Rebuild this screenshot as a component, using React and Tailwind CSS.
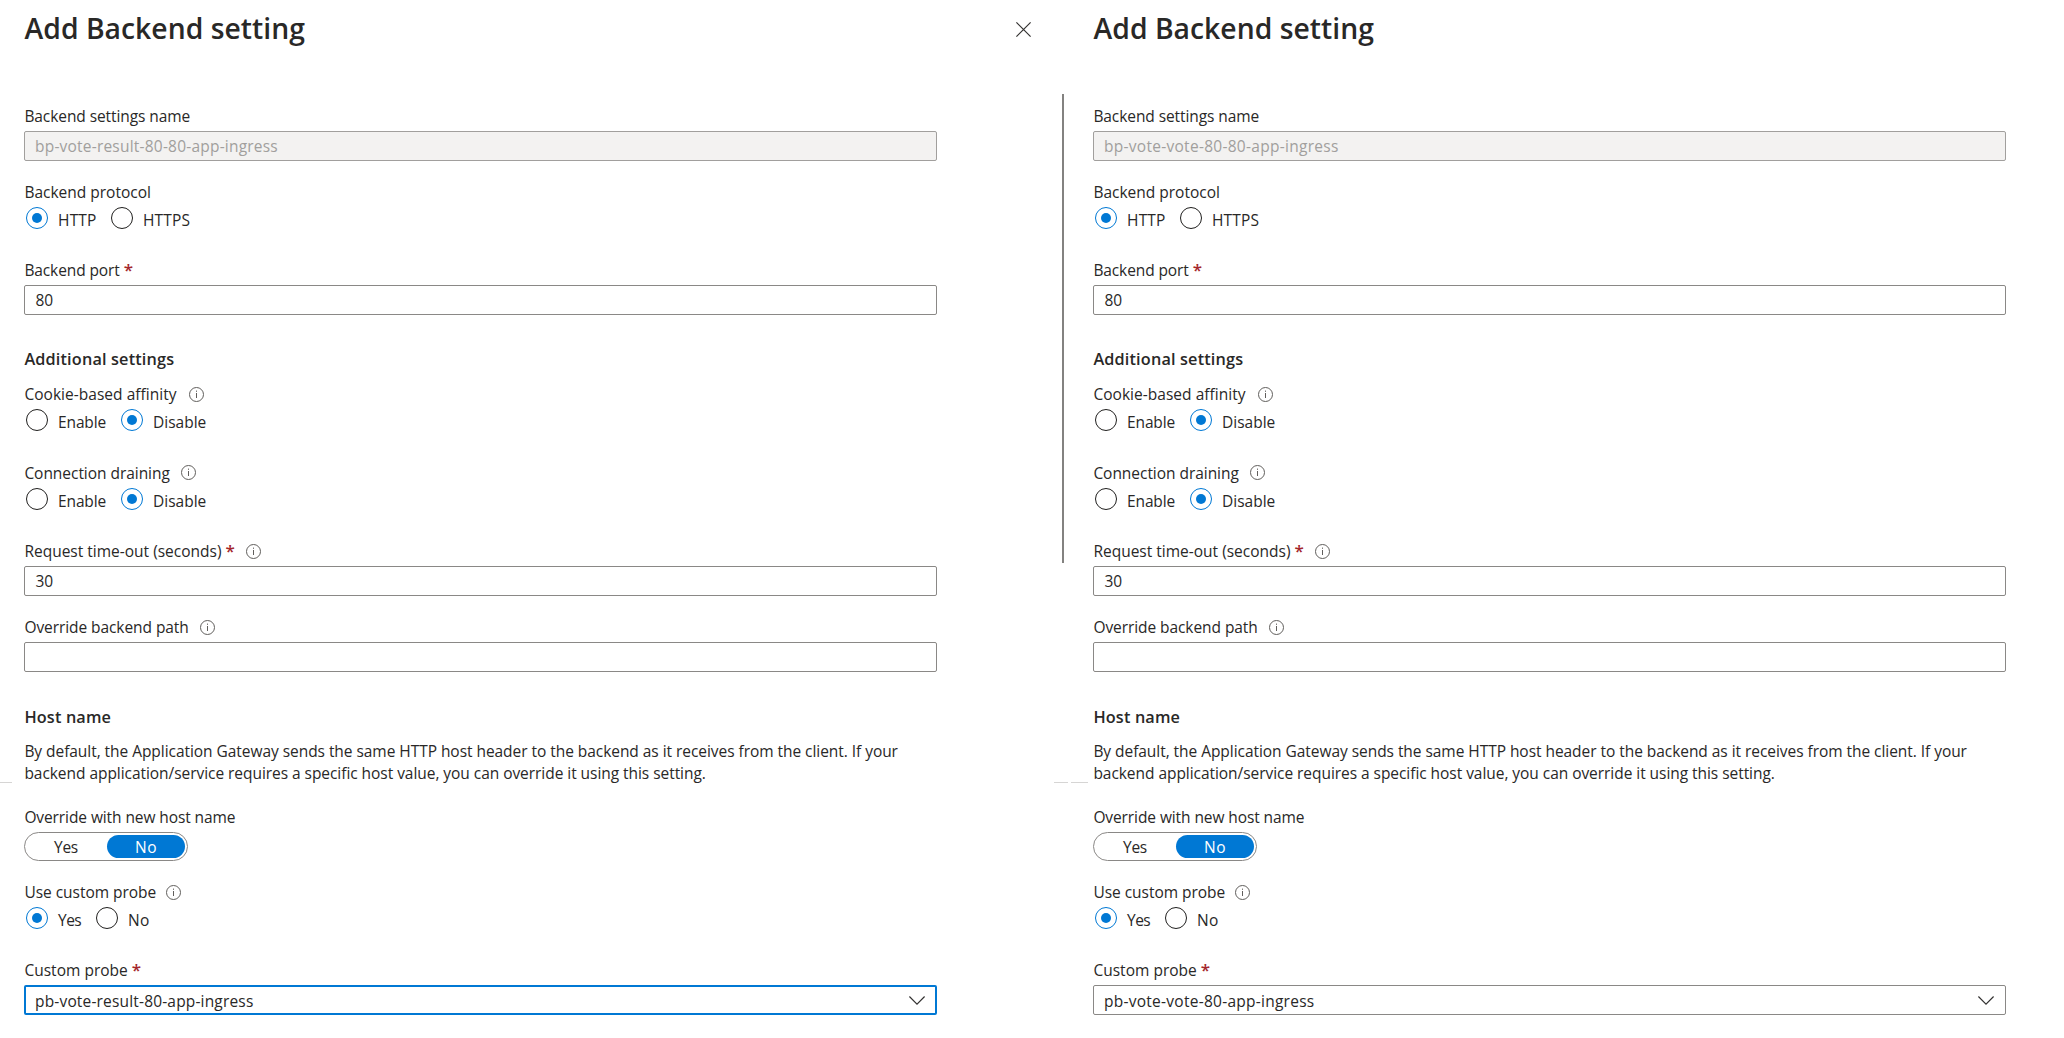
const InfoIcon = () => (
  <svg className="size-[15px] shrink-0" viewBox="0 0 15 15" fill="none" stroke="#605e5c">
    <circle cx="7.5" cy="7.5" r="7" />
    <path d="M7.5 6v5M7.5 3.6v1.2" />
  </svg>
);

const CloseIcon = () => (
  <svg className="size-[15px]" viewBox="0 0 15 15" fill="none" stroke="#323130" strokeWidth="1.15">
    <path d="M.4.4l14.2 14.2M14.6.4L.4 14.6" />
  </svg>
);

const ChevronIcon = () => (
  <svg className="mr-[11px] h-[9px] w-4 shrink-0" viewBox="0 0 16 9" fill="none" stroke="#323130" strokeWidth="1.15">
    <path d="M.4.5L8 8.1 15.6.5" />
  </svg>
);

function Label({ children, className = "", required, info }) {
  return (
    <div className="flex h-[26px] items-start whitespace-nowrap pl-[0.4px]">
      <span className={className}>{children}</span>
      {required && (
        <span className="ml-1 h-[22px] w-2 text-[17px] font-semibold leading-[22px] text-[#a4262c]">*</span>
      )}
      {info && <span className={info}><InfoIcon /></span>}
    </div>
  );
}

function Radio({ checked, label, className = "" }) {
  return (
    <div className="flex h-[22px]">
      <span
        className={
          checked
            ? "flex size-[22px] items-center justify-center rounded-full border border-[#0078d4]"
            : "size-[22px] rounded-full border border-[#201f1e]"
        }
      >
        {checked && <span className="size-2.5 rounded-full bg-[#0078d4]" />}
      </span>
      <span className={`ml-2.5 mt-0.5 whitespace-nowrap ${className}`}>{label}</span>
    </div>
  );
}

function Field({ value, disabled, className = "" }) {
  return (
    <div
      className={
        disabled
          ? "flex h-[30px] items-center rounded-[2px] border border-[#a19f9d] bg-[#f3f2f1] pl-2.5 text-[#a19f9d]"
          : "flex h-[30px] items-center rounded-[2px] border border-[#8a8886] bg-white pl-[10.4px]"
      }
    >
      <span className={className}>{value}</span>
    </div>
  );
}

function Select({ value, focused, className = "" }) {
  return (
    <div
      className={
        focused
          ? "flex h-[30px] items-center justify-between rounded-[2px] border-2 border-[#0078d4] pl-[9px] [&>svg]:mr-2.5"
          : "flex h-[30px] items-center justify-between rounded-[2px] border border-[#8a8886] pl-2.5"
      }
    >
      <span className={`mt-0.5 ${className}`}>{value}</span>
      <ChevronIcon />
    </div>
  );
}

function Heading({ children, className }) {
  return <h2 className={`pl-[0.4px] text-[16.25px] font-semibold leading-[22px] tracking-[0.16px] ${className}`}>{children}</h2>;
}

function Panel({ name, probe, focused, nameClass, probeClass }) {
  return (
    <section className="w-[913px] shrink-0">
      <header className="h-[105px] pl-[0.5px] pt-[9px]">
        <h1 className="text-[28.3px] font-semibold leading-[38px] tracking-[0.03px]">Add Backend setting</h1>
      </header>

      <Label className="tracking-[-0.08px]">Backend settings name</Label>
      <Field value={name} disabled className={nameClass} />

      <div className="mt-5">
        <Label>Backend protocol</Label>
        <div className="ml-0.5 flex">
          <div className="w-[85px]"><Radio checked label="HTTP" className="tracking-[0.2px]" /></div>
          <Radio label="HTTPS" className="tracking-[0.15px]" />
        </div>
      </div>

      <div className="mt-[30px]">
        <Label required className="tracking-[-0.11px]">Backend port</Label>
        <Field value="80" />
      </div>

      <Heading className="mt-[33px] h-[35px]">Additional settings</Heading>
      <Label info="ml-3 mt-1" className="tracking-[0.03px]">Cookie-based affinity</Label>
      <div className="ml-0.5 flex">
        <div className="w-[95px]"><Radio label="Enable" className="tracking-[-0.12px]" /></div>
        <Radio checked label="Disable" />
      </div>

      <div className="mt-[31px]">
        <Label info="ml-[11.5px] mt-[3px]" className="tracking-[-0.04px]">Connection draining</Label>
        <div className="ml-0.5 flex">
          <div className="w-[95px]"><Radio label="Enable" className="tracking-[-0.12px]" /></div>
          <Radio checked label="Disable" />
        </div>
      </div>

      <div className="mt-[30px]">
        <Label required info="ml-[12.6px] mt-1">Request time-out (seconds)</Label>
        <Field value="30" />
      </div>

      <div className="mt-5">
        <Label info="ml-[11px] mt-1" className="tracking-[-0.07px]">Override backend path</Label>
        <Field value="" />
      </div>

      <Heading className="mt-[34px] h-[34px]">Host name</Heading>
      <p className="h-11 pl-[0.4px] tracking-[-0.048px]">
        By default, the Application Gateway sends the same HTTP host header to the backend as it receives from the client. If your backend application/service requires a specific host value, you can override it using this setting.
      </p>

      <div className="mt-[22px]">
        <Label className="tracking-[-0.09px]">Override with new host name</Label>
        <div className="flex h-[29px] w-[164px] items-center rounded-full border border-[#8a8886] pr-0.5">
          <span className="flex-1 pt-px text-center tracking-[-0.3px]">Yes</span>
          <span className="flex h-[23px] w-[78px] items-center justify-center rounded-full bg-[#0078d4] pt-px tracking-[0.4px] text-white">
            No
          </span>
        </div>
      </div>

      <div className="mt-5">
        <Label info="ml-2.5 mt-1" className="tracking-[-0.03px]">Use custom probe</Label>
        <div className="ml-0.5 flex">
          <div className="w-[70px]"><Radio checked label="Yes" className="tracking-[-0.5px]" /></div>
          <Radio label="No" className="tracking-[0.4px]" />
        </div>
      </div>

      <div className="mt-[30px]">
        <Label required className="tracking-[0.02px]">Custom probe</Label>
        <Select value={probe} focused={focused} className={probeClass} />
      </div>
    </section>
  );
}

export default function App() {
  return (
    <main className="flex h-[1038px] w-[2064px] overflow-hidden bg-white font-['Open_Sans','Noto_Sans',sans-serif] text-[15.5px] leading-[22px] text-[#292827]">
      <div className="w-6 shrink-0 pt-[782px]">
        <div className="h-px w-3 bg-[#d6d5d4]" />
      </div>
      <Panel
        focused
        name="bp-vote-result-80-80-app-ingress"
        nameClass="tracking-[0.21px]"
        probe="pb-vote-result-80-app-ingress"
        probeClass="tracking-[0.17px]"
      />
      <div className="flex w-[156px] shrink-0 flex-col">
        <div className="h-[94px] pl-[79px] pt-[22px]">
          <CloseIcon />
        </div>
        <div className="ml-[125px] h-[469px] w-0.5 bg-[#838280]" />
        <div className="ml-[117px] mt-[219px] flex gap-[3px]">
          <div className="h-px w-3.5 bg-[#d6d5d4]" />
          <div className="h-px w-[17px] bg-[#d6d5d4]" />
        </div>
      </div>
      <Panel
        name="bp-vote-vote-80-80-app-ingress"
        nameClass="tracking-[0.28px]"
        probe="pb-vote-vote-80-app-ingress"
        probeClass="tracking-[0.26px]"
      />
    </main>
  );
}
